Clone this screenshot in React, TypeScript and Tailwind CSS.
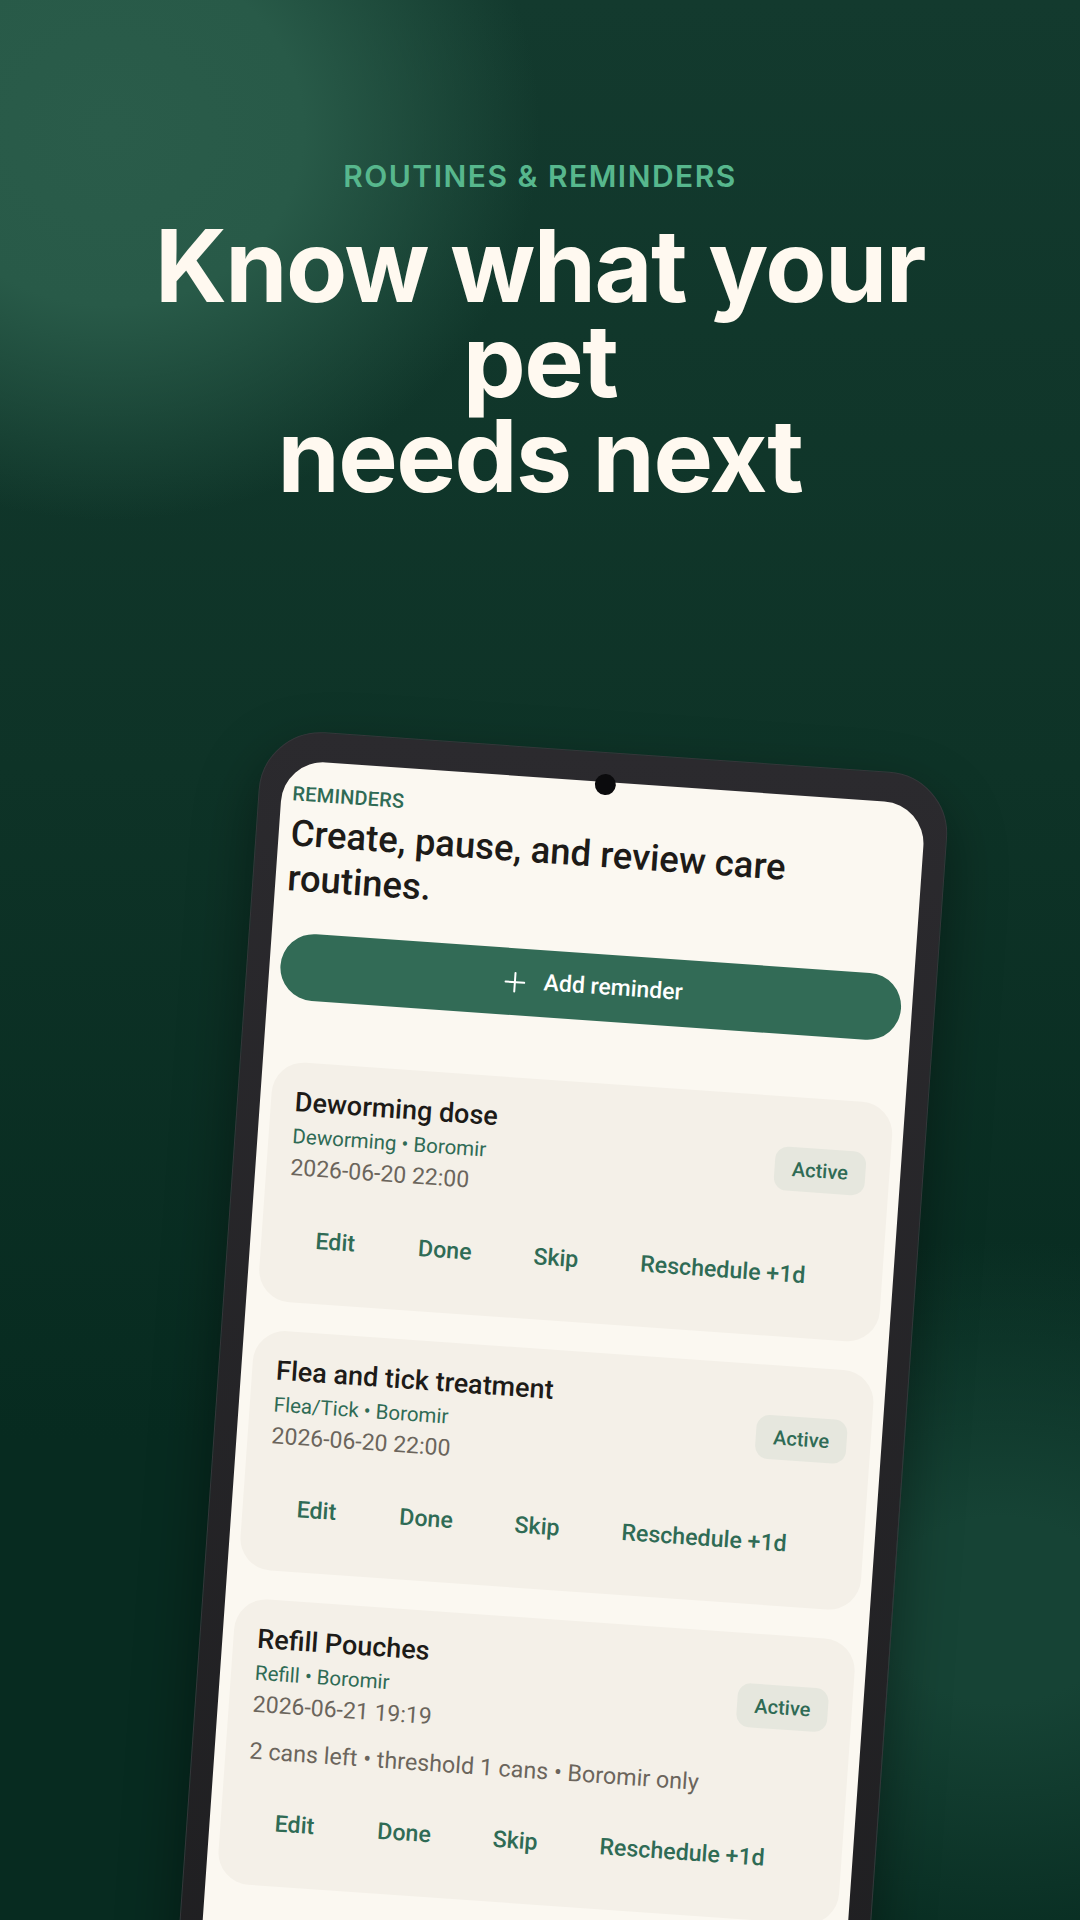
import { Plus } from 'lucide-react';

const roboto = 'font-["Roboto",sans-serif]';

interface Reminder {
  title: string;
  meta: string;
  due: string;
  note?: string;
}

const reminders: Reminder[] = [
  { title: 'Deworming dose', meta: 'Deworming • Boromir', due: '2026-06-20 22:00' },
  { title: 'Flea and tick treatment', meta: 'Flea/Tick • Boromir', due: '2026-06-20 22:00' },
  {
    title: 'Refill Pouches',
    meta: 'Refill • Boromir',
    due: '2026-06-21 19:19',
    note: '2 cans left • threshold 1 cans • Boromir only',
  },
];

function ReminderCard({ reminder }: { reminder: Reminder }) {
  return (
    <div className="rounded-[32px] bg-[#f4f0e8] pt-[23px] pb-[35px] pl-[24px] pr-[24px]">
      <div className="flex items-center justify-between">
        <div className="flex flex-col gap-[3px]">
          <div className="text-[27px] leading-[34px] font-medium text-[#1d1b18]">{reminder.title}</div>
          <div className="text-[20.5px] leading-[28px] text-[#2f6b55]">{reminder.meta}</div>
          <div className="text-[23px] leading-[30px] text-[#6b655c]">{reminder.due}</div>
        </div>
        <div className="flex h-[44px] w-[91px] items-center justify-center rounded-[13px] bg-[#e6e7de] text-[20px] font-medium text-[#2f6b55]">
          Active
        </div>
      </div>
      {reminder.note && (
        <div className="mt-[16px] text-[23.3px] leading-[30px] text-[#6b655c]">{reminder.note}</div>
      )}
      <div className="mt-[28px] -ml-[2px] flex h-[56px] items-center text-[23.2px] font-medium text-[#2f6b55]">
        {['Edit', 'Done', 'Skip', 'Reschedule +1d'].map((label) => (
          <button key={label} className="min-w-[104px] px-[31px] first:px-0">
            {label}
          </button>
        ))}
      </div>
    </div>
  );
}

export default function App() {
  return (
    <div className="h-[1920px] w-[1080px] overflow-hidden bg-[radial-gradient(ellipse_430px_390px_at_110px_130px,#2a5c4a_0%,#285a48_45%,rgba(40,90,72,0.55)_70%,rgba(40,90,72,0)_100%),radial-gradient(ellipse_470px_370px_at_1000px_1610px,#164335_0%,#164335_25%,rgba(22,67,53,0)_100%),linear-gradient(180deg,#133a2e_0%,#0e3327_40%,#072b20_75%,#072b20_100%)] pt-[158px]">
      <div className="text-center font-['Inter',sans-serif] text-[30px] leading-[36px] font-semibold tracking-[0.05em] text-[#57b78d]">
        ROUTINES &amp; REMINDERS
      </div>
      <h1 className="mx-auto mt-[24px] w-[900px] text-center font-['Inter',sans-serif] text-[100px] leading-[95px] font-bold tracking-[-0.015em] text-[#fff9f0]">
        Know what your pet
        <br />
        needs next
      </h1>

      {/* Tilted phone */}
      <div className="relative mt-[225px] ml-[263px] h-[1400px] w-[690px] origin-top-left rotate-[4deg] rounded-t-[62px] border border-[#36363a] bg-gradient-to-b from-[#2b2a2e] to-[#1e1e20] px-[22px] pt-[29px] shadow-[0_24px_60px_rgba(0,0,0,0.4)]">
        <div className="absolute top-[21px] left-[334px] z-10 h-[21px] w-[21px] rounded-full bg-[#0b0b0d]" />
        <div className={`${roboto} h-full rounded-t-[42px] bg-[#fbf8f1] px-[11px] pt-[21px]`}>
          <div className="text-[20px] leading-[24px] font-medium tracking-[0.01em] text-[#2f6b55]">REMINDERS</div>
          <h2 className="mt-[5px] pl-px text-[36.5px] leading-[45px] font-medium text-[#1d1b18]">
            Create, pause, and review care routines.
          </h2>
          <button className="mt-[32px] flex h-[67px] w-full items-center justify-center gap-[13px] rounded-full bg-[#326b56] text-[23px] font-medium text-white">
            <Plus size={32} strokeWidth={1.5} />
            Add reminder
          </button>
          <div className="mt-[62px] flex flex-col gap-[29px]">
            {reminders.map((r) => (
              <ReminderCard key={r.title} reminder={r} />
            ))}
          </div>
        </div>
      </div>
    </div>
  );
}
